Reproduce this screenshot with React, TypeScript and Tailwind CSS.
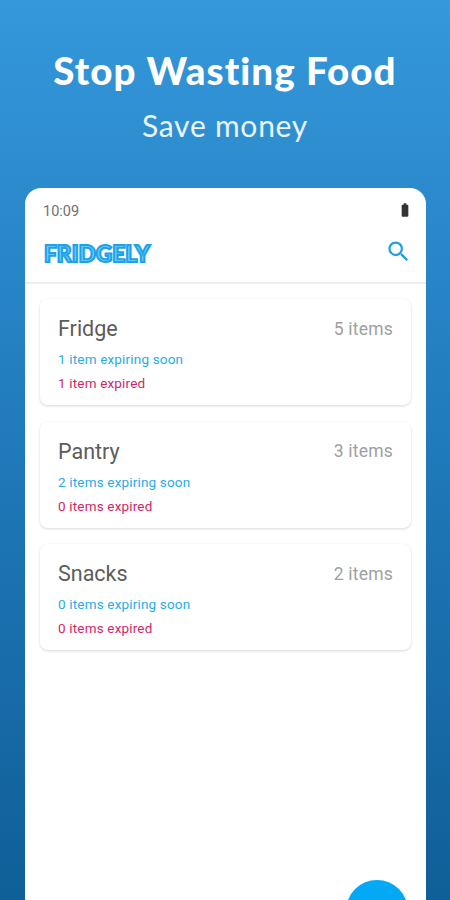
import { MdBatteryFull, MdSearch } from 'react-icons/md'

const lists = [
  { name: 'Fridge', count: '5 items', expiring: '1 item expiring soon', expired: '1 item expired' },
  { name: 'Pantry', count: '3 items', expiring: '2 items expiring soon', expired: '0 items expired' },
  { name: 'Snacks', count: '2 items', expiring: '0 items expiring soon', expired: '0 items expired' },
]

function ListCard({ name, count, expiring, expired }: (typeof lists)[number]) {
  return (
    <div className="h-[106px] rounded-lg bg-white px-[18px] pt-[15px] shadow-[0_1px_3px_rgba(0,0,0,0.16)]">
      <div className="flex h-[30px] items-center justify-between">
        <h2 className="text-[21.5px] leading-none text-[#5c5c5c]">{name}</h2>
        <span className="pt-px text-[17.5px] leading-none tracking-[0.2px] text-[#a0a0a0]">{count}</span>
      </div>
      <p className="mt-[3px] text-[13.5px] leading-6 tracking-[0.17px] text-[#29abe6]">{expiring}</p>
      <p className="text-[13.5px] leading-6 tracking-[0.17px] text-[#d02767]">{expired}</p>
    </div>
  )
}

export default function App() {
  return (
    <div className="flex h-[900px] w-[450px] flex-col overflow-hidden bg-linear-to-b from-[#3498db] via-[#2079ba] to-[#0f5f98] font-['Roboto',sans-serif]">
      {/* Headline */}
      <header className="h-[188px] shrink-0 pt-[47px] text-center font-['Lato',sans-serif] text-white">
        <h1 className="text-[38.5px] leading-[46px] font-black tracking-[1.05px] whitespace-nowrap">Stop Wasting Food</h1>
        <p className="mt-[14px] text-[30px] leading-9 tracking-[0.75px] text-white/90">Save money</p>
      </header>

      {/* Phone */}
      <main className="ml-[25px] flex w-[401px] flex-1 flex-col overflow-hidden rounded-t-[16px] bg-white">
        <div className="flex h-[44px] shrink-0 items-center justify-between pt-[2px] pr-[13px] pl-[18px]">
          <span className="pt-px text-[14.5px] text-[#707070]">10:09</span>
          <MdBatteryFull size={16} className="mb-[2px] text-[#333]" />
        </div>
        <div className="flex h-[52px] shrink-0 items-start justify-between border-b-2 border-[#eee] pr-[15px] pl-[18px]">
          {/* Inline lettering: pale core with a bright outline */}
          <svg width="120" height="44" viewBox="0 0 120 44" className="overflow-visible" aria-label="Fridgely">
            <text
              x="1"
              y="29.5"
              textLength="106"
              lengthAdjust="spacingAndGlyphs"
              className="fill-[#7dcffa] stroke-[#1aa3ea] stroke-[2.1px] font-['Lato',sans-serif] text-[23px] font-black"
            >
              FRIDGELY
            </text>
          </svg>
          <MdSearch size={27} className="mt-[6px] -mr-px text-[#1b9fe2]" />
        </div>
        <div className="flex flex-col gap-[16.5px] px-[15px] pt-[15px]">
          {lists.map(list => (
            <ListCard key={list.name} {...list} />
          ))}
        </div>
        <button aria-label="Add" className="mt-auto mr-[18.5px] -mb-[42px] size-[62px] shrink-0 self-end rounded-full bg-[#03a9f4]" />
      </main>
    </div>
  )
}
